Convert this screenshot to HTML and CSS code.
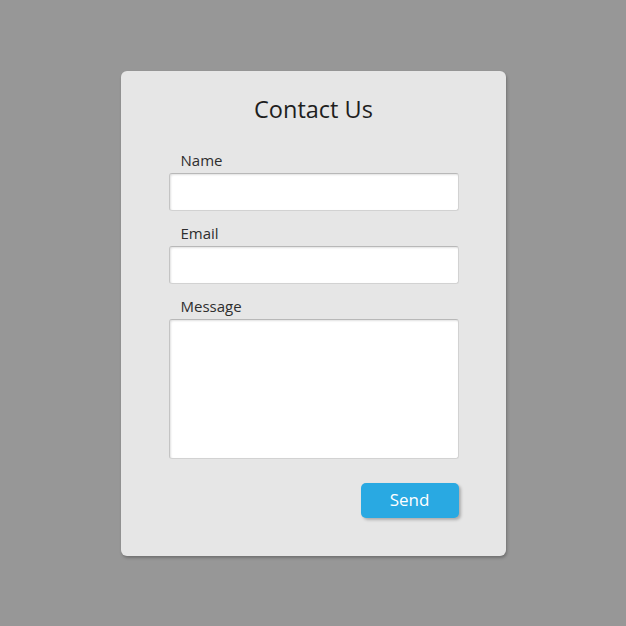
FILE: index.html
```html
<!DOCTYPE html>
<html lang="en">
<head>
	<meta charset="UTF-8">
	<title>Contact Us</title>
	<link rel="stylesheet" href="styles.css">
</head>
<body>
	<div class="contact">
		<div class="contact-title">Contact Us</div>
		<div class="contact-form">
			<div class="contact-field">
				<label for="name">Name</label>
				<input type="text" id="name" class="contact-input">
			</div>
			<div class="contact-field">
				<label for="email">Email</label>
				<input type="text" id="email" class="contact-input">
			</div>
			<div class="contact-field">
				<label for="message">Message</label>
				<textarea id="message" class="contact-input contact-text"></textarea>
			</div>
			<div class="contact-send"><a href="javascript:void(0);">Send</a></div>
		</div>
	</div>
</body>
</html>
```

FILE: styles.css
```css
html, body, div, label, a {
    padding: 0px;
    margin: 0px;
}
body {
    min-height: 626px;
    background: #979797;
    display: flex;
    align-items: center;
    justify-content: center;
    font-family: "Open Sans", "Noto Sans", sans-serif;
}
.contact {
    width: 385px;
    height: 485px;
    box-sizing: border-box;
    padding: 23px 47px 0px 48px;
    background: #e6e6e6;
    border-radius: 6px;
    box-shadow: 1px 2px 3px rgba(0, 0, 0, 0.25);
}
.contact-title {
    text-align: center;
    font-size: 23.5px;
    line-height: 30px;
    height: 30px;
    color: #1e1e1e;
}
.contact-form {
    padding-top: 14px;
}
.contact-field {
    margin-top: 12px;
}
.contact-field label {
    display: block;
    padding-left: 12px;
    font-size: 15px;
    line-height: 20px;
    height: 20px;
    color: #2e2e2e;
    margin-bottom: 3px;
}
.contact-input {
    display: block;
    width: 290px;
    height: 38px;
    box-sizing: border-box;
    margin: 0px;
    background: #ffffff;
    border: 1px solid #d2d2d2;
    border-top-color: #b8b8b8;
    border-left-color: #c4c4c4;
    border-radius: 3px;
    box-shadow: inset 1px 1px 2px rgba(0, 0, 0, 0.12);
    outline: none;
    resize: none;
}
.contact-text {
    height: 140px;
}
.contact-send {
    display: flex;
    justify-content: flex-end;
    margin-top: 24px;
}
.contact-send a {
    display: block;
    width: 98px;
    height: 35px;
    line-height: 34px;
    text-align: center;
    font-size: 17px;
    color: #ffffff;
    text-decoration: none;
    background: #29a9e2;
    border-radius: 5px;
    box-shadow: 2px 2px 3px rgba(0, 0, 0, 0.25);
}
```
